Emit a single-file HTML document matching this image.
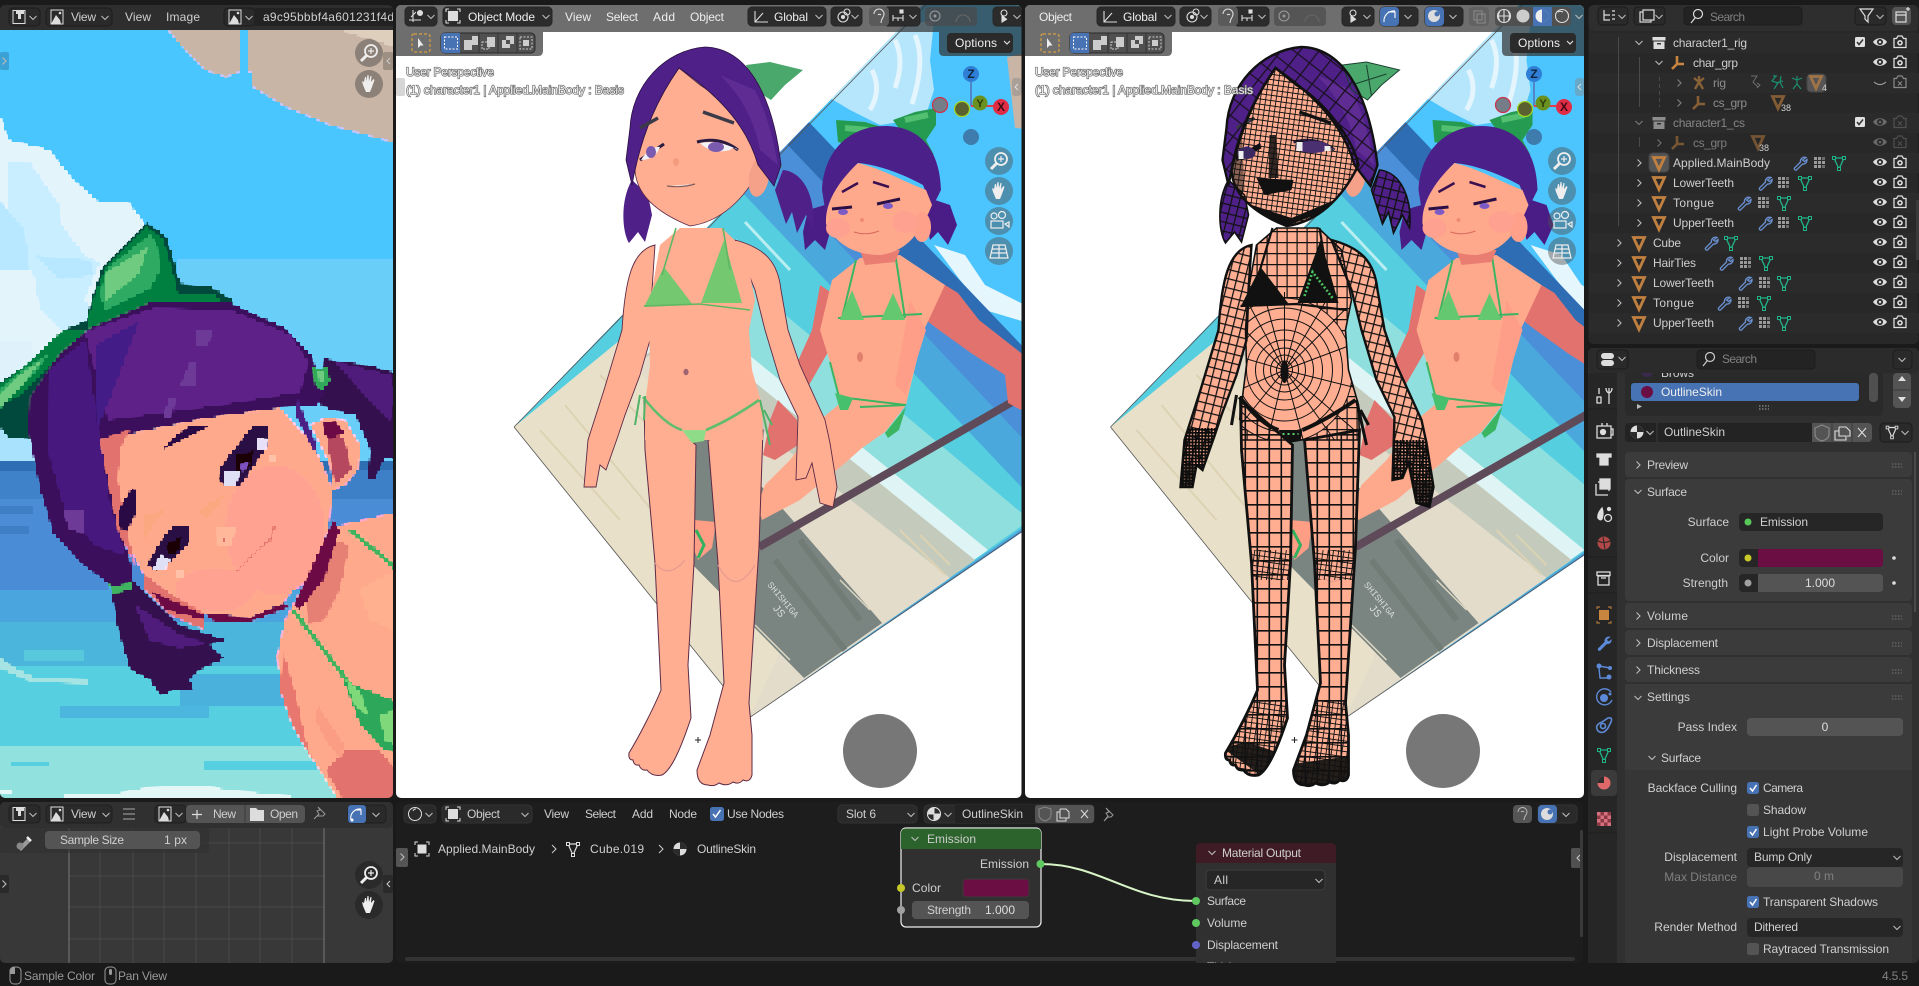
<!DOCTYPE html>
<html><head><meta charset="utf-8"><title>Blender</title>
<style>
html,body{margin:0;padding:0;background:#1a1a1a;width:1919px;height:986px;overflow:hidden}
svg{display:block}
.t{font:12px "Liberation Sans",sans-serif;fill:#cfcfcf}
.d{fill:#808080}
.w{fill:#eee}
.e{text-anchor:end}
.m{text-anchor:middle}
.o{font:12px "Liberation Sans",sans-serif;fill:#ececec;stroke:#666;stroke-width:1.3px;paint-order:stroke}
</style></head><body>
<svg width="1919" height="986" viewBox="0 0 1919 986" xmlns="http://www.w3.org/2000/svg">
<defs>
<filter id="px" filterUnits="userSpaceOnUse" x="0" y="30" width="396" height="772" color-interpolation-filters="sRGB">
<feFlood x="1" y="31" width="2" height="2" flood-color="#000"/>
<feComposite width="4" height="4"/>
<feTile result="a"/>
<feComposite in="SourceGraphic" in2="a" operator="in"/>
<feMorphology operator="dilate" radius="1"/>
</filter>
<clipPath id="c1"><rect x="0" y="5" width="393" height="793" rx="5"/></clipPath>
<clipPath id="c2"><rect x="396" y="5" width="625.5" height="793" rx="5"/></clipPath>
<clipPath id="c3"><rect x="1025" y="5" width="559" height="793" rx="5"/></clipPath>
<clipPath id="cn"><rect x="396" y="802" width="1187" height="161" rx="5"/></clipPath>
<clipPath id="cq"><polygon points="514,427 749,718 1250,377 1250,-200 1140,-220"/></clipPath>
<clipPath id="cname"><rect x="255" y="5" width="138" height="25"/></clipPath>

<!-- wire patterns -->
<pattern id="pFine" width="5.2" height="5.2" patternUnits="userSpaceOnUse" patternTransform="rotate(8)"><path d="M0 .5H5.200M.5 0V5.200" stroke="#111" stroke-width=".9" fill="none"/></pattern>
<pattern id="pDense" width="3.2" height="3.2" patternUnits="userSpaceOnUse"><path d="M0 .8H3.200M.8 0V3.200" stroke="#0c0c0c" stroke-width="1.800" fill="none"/></pattern>
<pattern id="pHair" width="15" height="15" patternUnits="userSpaceOnUse" patternTransform="rotate(38)"><path d="M0 .5H15M.5 0V15" stroke="#1a1020" stroke-width="1.600" fill="none"/></pattern>
<pattern id="pLeg" width="12" height="14" patternUnits="userSpaceOnUse"><path d="M0 .8H12M.8 0V14" stroke="#111" stroke-width="1.600" fill="none"/></pattern>
<pattern id="pArm" width="8" height="9" patternUnits="userSpaceOnUse" patternTransform="rotate(14)"><path d="M0 .6H8M.6 0V9" stroke="#111" stroke-width="1.300" fill="none"/></pattern>
<pattern id="pChest" width="10" height="11" patternUnits="userSpaceOnUse"><path d="M0 .6H10M.6 0V11" stroke="#111" stroke-width="1.200" fill="none"/></pattern>

<!-- girl shapes -->
<path id="armL" d="M655 245C632 250 625 280 622 330L604 390 588 440 584 487 596 487 600 465 606 470 618 436 625 415 640 375 650 340 652 290Z"/>
<path id="armR" d="M735 240C765 248 778 262 781 290L788 330 800 365 825 420 830 443 837 487 833 507 820 503 812 463 806 478 796 480 798 417 780 380 765 330 755 290Z"/>
<path id="torso" d="M680 228H722L745 250 755 300 749 330 752 370 762 405 763 440H645L645 405 650 365 649 330 652 290 660 245Z"/>
<path id="legL" d="M644 400 645 450 655 563 661 690C655 705 640 735 629 753Q628 760 633 760 634 766 639 765 641 771 647 770 652 777 662 775C672 770 682 745 691 718L688 665 694 563 696 445Z"/>
<path id="legR" d="M708 440 718 563 724 683 710 735 697 770Q697 785 708 785 714 787 719 783 727 787 733 782 739 785 743 780 750 783 752 775L752 735 749 703 759 547 763 430Z"/>
<path id="face" d="M679 68C660 95 642 130 635 170 636 190 650 210 690 226 720 222 745 200 762 165 755 135 725 100 700 85Z"/>
<path id="hair" d="M630 128C632 85 665 50 705 47 745 48 772 90 781 165L774 186 758 165C748 130 725 100 679 68 660 95 642 130 632 185L626 160Z"/>
<path id="pigR" d="M783 170C805 172 816 200 813 228L806 215 797 233 792 212 786 224 775 190Z"/>
<path id="pigL" d="M632 180C620 200 622 232 629 243L638 232 645 242 652 215 648 195Z"/>
<path id="bow" d="M746 65 770 62 803 70 785 85 771 100 755 90Z"/>

<!-- scene (image plane) -->
<g id="scene">
<g clip-path="url(#cq)">
<rect x="500" y="-220" width="760" height="960" fill="#4cc5ff"/>
<polygon points="880,30 934,20 930,60 934,90 925,118 880,125 850,110 825,95" fill="#b5e6fc"/>
<path d="M895 40Q905 60 895 88M915 35Q926 60 912 104M872 70Q882 90 870 110" stroke="#e4f5fd" stroke-width="5" fill="none"/>
<polygon points="1007,57 1040,50 1040,130 1015,128" fill="#c8b5a5"/>
<polygon points="934,245 965,255 985,285 1025,305 1025,322 985,310 960,280" fill="#e6f6fd"/>
<polygon points="807,120 1129,458 749,718 514,427" fill="#2e6db3"/>
<polygon points="785,142 1105,480 749,718 514,427" fill="#4a8fd8"/>
<polygon points="765,165 1075,494 749,718 514,427" fill="#4aa8dc"/>
<polygon points="740,190 1045,512 749,718 514,427" fill="#55cfe0"/>
<polygon points="720,260 1030,520 749,718 514,427" fill="#8fdfdf"/>
<path d="M745 222 790 270M735 240 770 275" stroke="#b8eeef" stroke-width="3" fill="none"/>
<polygon points="700,315 988,550 749,718 514,427" fill="#dff5f5"/>
<polygon points="690,330 975,560 749,718 514,427" fill="#c5cbbc"/>
<polygon points="660,350 950,578 749,718 514,427" fill="#e3dccb"/>
<polygon points="514,427 620,340 800,610 749,718" fill="#e8e0c8"/>
<path d="M540 430 620 520M565 405 660 520M600 375 690 470M740 560 790 610M900 530 945 575M920 535 950 565" stroke="#ddd2b4" stroke-width="2" fill="none"/>
<polygon points="804,678 882,623 775,500 700,425 688,450 688,560" fill="#7a8480"/>
<path d="M775 560 845 650M800 540 860 620" stroke="#727c76" stroke-width="6" fill="none"/>
<path d="M755 625 790 660M840 580 870 610" stroke="#ddd7c2" stroke-width="1.500" fill="none"/>
<path d="M759 547 1040 386" stroke="#5e4a58" stroke-width="8" fill="none"/>
<text x="767" y="585" transform="rotate(50 767 585)" style="font:9px 'Liberation Mono',monospace;fill:#d8dcd8">SHISHIGA</text>
<text x="772" y="608" transform="rotate(50 772 608)" style="font:11px 'Liberation Mono',monospace;fill:#d8dcd8">JS</text>
</g>
<path d="M514 427 749 718 1040 519M514 427 960-30" stroke="#555" stroke-width=".8" fill="none"/>
<!-- sitter -->
<polygon points="945,285 958,293 979,320 1030,360 1030,382 1021,410 1008,403 1005,375 971,353 939,330 926,320" fill="#e2726e"/>
<polygon points="820,285 812,330 788,383 805,392 835,340 842,300" fill="#e2726e"/>
<polygon points="778,400 797,420 798,445 775,460 763,455 770,420" fill="#e2726e"/>
<polygon points="694,520 716,522 712,548 698,560 694,550" fill="#ff9d85"/>
<path d="M696 530 704 545 698 558" stroke="#33b060" stroke-width="3" fill="none"/>
<polygon points="906,405 885,432 862,448 845,463 800,500 762,520 757,505 765,485 790,460 820,420 850,395" fill="#ffa98c"/>
<polygon points="832,280 860,258 900,255 945,285 924,330 906,405 841,405 830,362 820,330" fill="#ffa98c"/>
<polygon points="910,300 926,330 906,395 895,385" fill="#ff9e88"/>
<ellipse cx="860" cy="357" rx="3" ry="5" fill="#e2806e"/>
<polygon points="885,433 906,407 899,430 888,438" fill="#3cb563"/>
<path d="M830 362 839 397 906 405M860 407 906 405" stroke="#3cb563" stroke-width="2" fill="none"/>
<polygon points="835,393 853,398 848,410 840,410" fill="#46c06c"/>
<path d="M856 260 842 318M895 253 905 318M838 318 922 314" stroke="#3cb563" stroke-width="2" fill="none"/>
<polygon points="852,290 864,320 840,320" fill="#64c870"/>
<polygon points="893,293 905,320 881,320" fill="#64c870"/>
<polygon points="860,250 900,250 895,262 865,265" fill="#e97d72"/>
<!-- head -->
<polygon points="808,210 825,205 832,225 825,250 815,240 805,250 803,232" fill="#4a1c85"/>
<polygon points="935,200 950,205 957,225 948,245 938,232 930,240 925,215" fill="#4a1c85"/>
<polygon points="836,120 865,122 885,128 880,135 850,145 838,142" fill="#249b50"/>
<polygon points="893,120 915,112 936,108 936,125 926,140 934,155 920,150 900,130" fill="#249b50"/>
<path d="M845 128 868 130M905 120 928 115" stroke="#53bf70" stroke-width="6" fill="none"/>
<path d="M822 190C824 150 850 126 885 126 920 126 940 150 941 190L932 208 923 185C905 175 880 165 858 163 840 180 835 200 826 215Z" fill="#4c2089"/>
<path d="M858 163C835 185 825 205 826 224 835 242 852 255 880 255 905 252 920 235 932 205L926 190C900 180 885 170 858 163Z" fill="#ffa98c"/>
<ellipse cx="922" cy="227" rx="9" ry="15" fill="#ffa08a"/>
<ellipse cx="838" cy="228" rx="12" ry="10" fill="#ffa190"/>
<ellipse cx="905" cy="222" rx="13" ry="11" fill="#ffa190"/>
<path d="M842 192 858 183M873 182 889 187" stroke="#3a1050" stroke-width="2.500" fill="none"/>
<path d="M832 209 852 207M877 204 900 199" stroke="#2b1045" stroke-width="3" fill="none"/>
<ellipse cx="843" cy="212" rx="5" ry="3" fill="#7d5bc6"/>
<ellipse cx="888" cy="206" rx="5" ry="3" fill="#7d5bc6"/>
<path d="M854 232Q866 236 879 231" stroke="#d8695f" fill="none"/>
<circle cx="862" cy="220" r="2" fill="#f08a75"/>
</g>

<!-- girl -->
<g id="girl">
<use href="#pigL" fill="#4e2088"/>
<use href="#pigR" fill="#4e2088"/>
<use href="#bow" fill="#4aa86c"/>
<use href="#armL" fill="#ffae92" stroke="#5c2a45" stroke-width=".9"/>
<use href="#armR" fill="#ffae92" stroke="#5c2a45" stroke-width=".9"/>
<use href="#legL" fill="#ffae92" stroke="#5c2a45" stroke-width="1"/>
<use href="#legR" fill="#ffae92" stroke="#5c2a45" stroke-width="1"/>
<use href="#torso" fill="#ffae92"/>
<use href="#face" fill="#ffae92" stroke="#5c2a45" stroke-width=".8"/>
<ellipse cx="759" cy="177" rx="10" ry="20" fill="#f5a088" transform="rotate(10 759 177)"/>
<path d="M772 170 781 165" stroke="#5a9a5c" stroke-width="4"/>
<use href="#hair" fill="#4e2088" stroke="#2a1040" stroke-width=".8"/>
<path d="M755 90C770 120 775 150 778 165L760 150C755 125 745 100 720 75Z" fill="#5e2c92"/>
<g fill="#74c870">
<polygon points="664,267 644,307 693,305"/>
<polygon points="724,240 742,303 701,303"/>
</g>
<path d="M676 228 662 275M723 228 730 270M644 306 700 304 750 310" stroke="#5fb765" stroke-width="1.600" fill="none"/>
<path d="M643 397Q665 425 682 430M759 400Q730 420 706 430" stroke="#5fbe6e" stroke-width="2.600" fill="none"/>
<path d="M640 395 635 425M645 396 644 420M760 400 770 445M764 410 772 425" stroke="#4fb266" stroke-width="2" fill="none"/>
<polygon points="682,430 706,430 704,441 692,443" fill="#8fdc88"/>
<ellipse cx="686" cy="372" rx="2.600" ry="3.200" fill="#a06470"/>
<path d="M655 563Q668 580 685 560M718 565Q735 598 755 565" stroke="#e59a90" stroke-width="1.200" fill="none"/>
<path d="M703 112 734 123" stroke="#3a3a48" stroke-width="3.500" fill="none"/>
<path d="M640 128 658 118" stroke="#3a3a48" stroke-width="3.500" fill="none"/>
<path d="M697 142Q720 136 738 150" stroke="#2a1c40" stroke-width="3" fill="none"/>
<path d="M700 143Q712 155 730 150 735 146 738 150 720 140 700 143Z" fill="#f2f2f8"/>
<ellipse cx="716" cy="147" rx="8" ry="5" fill="#7a5bb0"/>
<path d="M640 160 664 144" stroke="#2a1c40" stroke-width="3" fill="none"/>
<path d="M641 160Q655 160 660 147 650 146 641 160Z" fill="#f2f2f8"/>
<ellipse cx="651" cy="152" rx="5" ry="6" fill="#7a5bb0"/>
<path d="M667 186Q682 188 695 184" stroke="#7f5d5d" stroke-width="1.200" fill="#f5ece8"/>
<ellipse cx="676" cy="162" rx="3" ry="4" fill="#f59c7f"/>
</g>

<!-- wire overlay -->
<clipPath id="cTorso"><use href="#torso"/></clipPath>
<clipPath id="cArms"><use href="#armL"/><use href="#armR"/></clipPath>
<clipPath id="cLegs"><use href="#legL"/><use href="#legR"/></clipPath>
<clipPath id="cFace"><use href="#face"/></clipPath>
<g id="wire">
<use href="#bow" fill="none" stroke="#1a4030" stroke-width="1"/>
<path d="M755 85 790 74M770 65 775 96" stroke="#1a4030"/>
<use href="#pigL" fill="url(#pArm)" stroke="#111" stroke-width="1.600"/>
<use href="#pigR" fill="url(#pArm)" stroke="#111" stroke-width="1.600"/>
<use href="#torso" fill="url(#pChest)"/>
<g clip-path="url(#cTorso)" fill="none" stroke="#111" stroke-width="1">
<ellipse cx="688" cy="370" rx="68" ry="72" fill="#ffae92" stroke="none"/>
<ellipse cx="688" cy="370" rx="8" ry="9"/><ellipse cx="688" cy="370" rx="14" ry="15"/><ellipse cx="688" cy="370" rx="21" ry="22"/><ellipse cx="688" cy="370" rx="29" ry="30"/><ellipse cx="688" cy="370" rx="38" ry="40"/><ellipse cx="688" cy="370" rx="48" ry="51"/><ellipse cx="688" cy="370" rx="58" ry="62"/><ellipse cx="688" cy="370" rx="68" ry="72"/>
<path d="M688 370 628 310M688 370 650 300M688 370 668 296M688 370 688 292M688 370 708 296M688 370 730 300M688 370 748 310M688 370 768 340M688 370 768 390M688 370 758 430M688 370 738 440M688 370 708 445M688 370 670 445M688 370 640 430M688 370 620 400M688 370 620 350"/>
<ellipse cx="688" cy="372" rx="4" ry="11" fill="#111" stroke="none"/>
</g>
<use href="#torso" fill="none" stroke="#111" stroke-width="1.600"/>
<use href="#armL" fill="url(#pArm)" stroke="#111" stroke-width="2.400"/>
<use href="#armR" fill="url(#pArm)" stroke="#111" stroke-width="2.400"/>
<g clip-path="url(#cArms)"><rect x="580" y="428" width="45" height="65" fill="url(#pDense)"/><rect x="790" y="440" width="50" height="72" fill="url(#pDense)"/>
<rect x="580" y="465" width="30" height="28" fill="#111" opacity=".6"/><rect x="795" y="480" width="45" height="32" fill="#111" opacity=".6"/></g>
<use href="#legL" fill="url(#pLeg)" stroke="#111" stroke-width="2.800"/>
<use href="#legR" fill="url(#pLeg)" stroke="#111" stroke-width="2.800"/>
<g clip-path="url(#cLegs)"><rect x="625" y="700" width="130" height="90" fill="url(#pFine)"/><rect x="650" y="550" width="110" height="30" fill="url(#pFine)"/>
<polygon points="626,748 668,778 680,752 650,742" fill="#111" opacity=".92"/><polygon points="695,764 754,756 754,788 695,788" fill="#111" opacity=".92"/></g>
<use href="#face" fill="url(#pFine)"/>
<g clip-path="url(#cFace)">
<path d="M630 130 645 125 648 190 640 205Z" fill="#111" opacity=".5"/>
<path d="M660 178 697 180 695 190 668 195Z" fill="#111"/>
<path d="M673 135 680 135 682 178 672 178Z" fill="#111" opacity=".85"/>
<path d="M640 200 690 226 745 205 750 195 695 218Z" fill="#111"/>
<path d="M640 158 664 146" stroke="#111" stroke-width="5"/>
<path d="M703 112 734 123" stroke="#111" stroke-width="3"/>
<ellipse cx="716" cy="147" rx="17" ry="6" fill="#4a3070"/>
<rect x="700" y="142" width="6" height="9" fill="#eee"/><rect x="728" y="146" width="6" height="5" fill="#eee"/>
<ellipse cx="650" cy="153" rx="9" ry="6" fill="#3a2860"/><rect x="642" y="151" width="5" height="8" fill="#eee"/>
</g>
<use href="#face" fill="none" stroke="#111" stroke-width="2.500"/>
<use href="#hair" fill="url(#pHair)" stroke="#111" stroke-width="2.400"/>
<polygon points="664,267 644,307 693,305" fill="#111"/>
<polygon points="724,240 742,303 701,303" fill="#111"/>
<path d="M708 296 716 272 730 290 736 298" stroke="#4ac060" stroke-width="2.600" stroke-dasharray="2 2" fill="none"/>
<path d="M676 228 662 275M723 228 730 270M644 306 700 304 750 310" stroke="#111" stroke-width="2.200" fill="none"/>
<path d="M643 397Q665 425 682 430M759 400Q730 420 706 430" stroke="#111" stroke-width="4" fill="none"/>
<path d="M640 395 635 425M645 396 644 420M760 400 770 445M764 410 772 425" stroke="#111" stroke-width="3" fill="none"/>
<polygon points="682,430 706,430 704,441 692,443" fill="#111"/>
<path d="M686 434H702" stroke="#5ad070" stroke-width="2" stroke-dasharray="2 3"/>
</g>

<!-- viewport UI shared -->
<g id="vpR">
<path d="M939 32H1021.5V56H944Q939 56 939 51Z" fill="#303030" opacity=".7"/>
<rect x="947" y="33" width="66" height="20" rx="4" fill="#2b2b2b"/>
<text class="t w" x="955" y="47" textLength="42">Options</text>
<path d="M1004 41l3 3 3-3" fill="none" stroke="#ddd" stroke-width="1.200"/>
<path d="M971 82V106" stroke="#5386c8" stroke-width="2"/>
<path d="M971 106H994" stroke="#e03c4e" stroke-width="2"/>
<circle cx="971" cy="74" r="8" fill="#2f7fd6"/><text x="971" y="78" class="t m" style="fill:#10243c;font-weight:bold">Z</text>
<circle cx="971" cy="137" r="8" fill="#3b6f9e" opacity=".85"/>
<circle cx="980" cy="103" r="7.500" fill="#6a9020"/><text x="980" y="107" class="t m" style="fill:#2c3c0c;font-weight:bold;font-size:11px">Y</text>
<circle cx="940" cy="105" r="7.500" fill="#757d88" stroke="#d03048" stroke-width="1.200"/>
<circle cx="962" cy="109" r="7.500" fill="#5a6030" stroke="#a4d820" stroke-width="1.200"/>
<circle cx="1001" cy="107" r="8" fill="#e02c44"/><text x="1001" y="111" class="t m" style="fill:#3c0c14;font-weight:bold">X</text>
<g fill="#505050" opacity=".45"><circle cx="999" cy="161" r="14"/><circle cx="999" cy="191" r="14"/><circle cx="999" cy="221" r="14"/><circle cx="999" cy="251" r="14"/></g>
<use href="#iZoom" x="999" y="161"/><use href="#iHand" x="999" y="191"/>
<g fill="none" stroke="#eee" stroke-width="1.200">
<circle cx="994" cy="216" r="3"/><circle cx="1002" cy="215" r="3.500"/><rect x="991" y="221" width="12" height="7"/><path d="M1005 224l4-2v5z"/>
<path d="M993 245H1005L1008 258H990ZM999 245V258M992 249H1006M991 253H1007"/>
</g>
<rect x="1012" y="78" width="9.500" height="18" rx="3" fill="#888" opacity=".45"/>
<path d="M1018 84l-3 3 3 3" fill="none" stroke="#ddd"/>
</g>

<g id="vpL">
<path d="M396 32H543V51Q543 56 538 56H396Z" fill="#303030" opacity=".7"/>
<rect x="412" y="34" width="18" height="18" rx="2" fill="none" stroke="#d8a040" stroke-width="1.200" stroke-dasharray="3 2"/>
<path d="M418 38v10l2.500-2.500 3 0z" fill="#eee"/>
<rect x="441" y="33" width="94" height="20" rx="4" fill="#505050" stroke="#2a2a2a"/>
<path d="M445 33H460V53H445Q441 53 441 49V37Q441 33 445 33Z" fill="#4772b3"/>
<rect x="444.500" y="37" width="13" height="12" fill="none" stroke="#fff" stroke-dasharray="2 1.500"/>
<path d="M479 33V53M498 33V53M517 33V53" stroke="#333"/>
<path d="M464 40h8v-4h6v9h-6v5h-8z" fill="#ccc"/>
<path d="M487 37h8v10h-8v-4" fill="#ccc"/><rect x="482" y="42" width="7" height="7" fill="none" stroke="#ccc" stroke-dasharray="2 1"/>
<path d="M506 40h-4v8h8v-4h4v-8h-8z" fill="#ccc"/><rect x="506" y="40" width="4" height="4" fill="#505050"/>
<rect x="520" y="37" width="12" height="12" fill="none" stroke="#ccc" stroke-dasharray="2 1.500"/><rect x="523" y="40" width="6" height="6" fill="#ccc"/>
<text class="o" x="406" y="76" textLength="88">User Perspective</text>
<text class="o" x="406" y="94" textLength="218">(1) character1 | Applied.MainBody : Basis</text>
</g>

<!-- icons -->
<g id="iZoom" fill="none" stroke="#eee" stroke-width="1.800"><circle cx="2" cy="-2" r="6"/><path d="M-2.500 2.500-8 8" stroke-width="3"/><path d="M2-5V1M-1-2H5" stroke-width="1.200"/></g>
<g id="iHand"><path d="M-6 1-7-3-5-2-4-7-3-7-2.500-3-1.500-9-.5-9 0-3 1.500-8 2.500-8 2-2 4.500-5 5.500-4 3 3 1 8H-3Z" fill="#eee"/></g>
<g id="eye"><path d="M-7 0C-4-5 4-5 7 0 4 5-4 5-7 0Z" fill="#ddd"/><circle r="3" fill="#282828"/><circle r="1.300" fill="#ddd"/></g>
<g id="eyeD" opacity=".35"><use href="#eye"/></g>
<g id="cam"><path d="M-6-3.500H-3.500L-2-6H2L3.500-3.500H6V5.500H-6Z" fill="none" stroke="#ddd" stroke-width="1.300"/><circle cy=".8" r="2.800" fill="#ddd"/><circle cy=".8" r="1.200" fill="#282828"/></g>
<g id="camX" opacity=".75"><path d="M-6-3.500H-3.500L-2-6H2L3.500-3.500H6V5.500H-6Z" fill="none" stroke="#aaa" stroke-width="1.200"/><path d="M-2-.5 2 3.500M2-.5-2 3.500" stroke="#aaa"/></g>
<g id="mesh"><path d="M-5.500-5.500H5.500L0 6.500Z" fill="none" stroke="#c08040" stroke-width="2.800"/></g>
<g id="tri"><path d="M-5-5H5L0 6Z" fill="none" stroke="#1eb487" stroke-width="1.300"/><g fill="#282828" stroke="#1eb487"><rect x="-6.500" y="-6.500" width="3" height="3"/><rect x="3.500" y="-6.500" width="3" height="3"/><rect x="-1.500" y="4.500" width="3" height="3"/></g></g>
<g id="wr"><path d="M6-5.500A4 4 0 0 0 .5-1L-5.500 5A1.500 1.500 0 0 0-3.500 7L2.500 1A4 4 0 0 0 7-3.500L4.500-1.500 2.500-3Z" fill="none" stroke="#6a90d0" stroke-width="1.300"/></g>
<g id="dots" fill="#9a9a9a"><rect x="-6" y="-6" width="3" height="3"/><rect x="-2" y="-6" width="3" height="3"/><rect x="2" y="-6" width="3" height="3" opacity=".6"/><rect x="-6" y="-2" width="3" height="3"/><rect x="-2" y="-2" width="3" height="3"/><rect x="2" y="-2" width="3" height="3"/><rect x="-6" y="2" width="3" height="3"/><rect x="-2" y="2" width="3" height="3"/><rect x="2" y="2" width="3" height="3" opacity=".6"/></g>
<g id="empty"><path d="M-1-7V1M-1 1-6 6M-1 1H6" fill="none" stroke="#c8853f" stroke-width="2.600"/></g>
<g id="coll"><rect x="-6.500" y="-6" width="13" height="3.500" fill="#ddd"/><rect x="-5.500" y="-1.500" width="11" height="7.500" fill="#ddd"/><rect x="-2" y="0" width="4" height="1.500" fill="#333"/></g>
<g id="chk"><rect x="-5" y="-5" width="10" height="10" rx="1.500" fill="#e0e0e0"/><path d="M-3 0-1 2.500 3-2.500" fill="none" stroke="#333" stroke-width="1.500"/></g>
<g id="cd"><path d="M-3.500-2 0 1.500 3.500-2" fill="none" stroke="#bbb" stroke-width="1.100"/></g>
<g id="cr"><path d="M-1.500-3.500 2 0-1.500 3.500" fill="none" stroke="#bbb" stroke-width="1.100"/></g>
<g id="editorImg"><rect x="-6" y="-6.500" width="12" height="13" fill="none" stroke="#ddd"/><path d="M-3-6H5V-3H2V2H-1V-3H-3Z" fill="#ddd"/></g>
<g id="imgI"><rect x="-6" y="-7" width="12" height="14" fill="none" stroke="#ddd"/><path d="M-6 7-1-2 3 3 4 7Z" fill="#ddd"/><circle cx="3" cy="-4" r="1.300" fill="#ddd"/></g>
<g id="matI"><circle r="6.500" fill="#ddd"/><path d="M0-6.500A6.500 6.500 0 0 1 6.500 0H0ZM0 0H-6.500A6.500 6.500 0 0 0 0 6.500Z" fill="#2b2b2b"/></g>
<g id="objI"><path d="M-7-4V-7H-4M4-7H7V-4M7 4V7H4M-4 7H-7V4" fill="none" stroke="#ddd"/><rect x="-4.500" y="-4.500" width="9" height="9" fill="#ddd"/></g>
</defs>

<rect width="1919" height="986" fill="#1a1a1a"/>

<!-- ============ IMAGE EDITOR TOP ============ -->
<g clip-path="url(#c1)">
<g filter="url(#px)">
<rect x="0" y="30" width="396" height="772" fill="#4ac6ff"/>
<rect x="178" y="260" width="218" height="200" fill="#69cef8"/>
<!-- beige -->
<polygon points="168,30 185,50 205,70 226,77 239,72 239,30" fill="#c8b5a5"/>
<polygon points="247,30 247,72 251,72 253,87 286,107 330,125 392,142 396,142 396,30" fill="#c8b5a5"/>
<polygon points="341,30 396,47 396,30" fill="#decfbd"/>
<!-- clouds -->
<polygon points="0,115 8,140 49,150 73,180 100,203 129,203 143,222 160,300 170,345 90,400 30,430 0,460" fill="#e4f4fb"/>
<polygon points="8,162 30,162 60,205 62,225 85,255 100,262 85,300 110,330 60,330 30,270 8,220" fill="#c8eeff"/>
<polygon points="0,200 25,230 30,270 0,270" fill="#b8e8ff"/>
<polygon points="35,255 90,260 95,275 60,280" fill="#b8e8ff"/>
<polygon points="35,285 60,280 85,300 85,325 60,330 40,310" fill="#c8eeff"/>
<polygon points="0,340 30,340 55,410 10,440 0,450" fill="#dff2fb"/>
<polygon points="0,395 40,420 40,460 0,460" fill="#a8e2fc"/>
<!-- sea -->
<rect y="460" width="396" height="12" fill="#2e6fb4"/>
<rect y="472" width="396" height="28" fill="#3f82ca"/>
<rect y="500" width="396" height="90" fill="#4a8dd6"/>
<rect x="0" y="505" width="34" height="10" fill="#3f7fc6"/><rect y="525" width="30" height="8" fill="#3f7fc6"/>
<rect x="330" y="470" width="66" height="30" fill="#3d80c8"/>
<rect y="590" width="396" height="32" fill="#4aa5de"/>
<rect x="120" y="610" width="130" height="25" fill="#4a8dd6" opacity=".7"/>
<rect y="622" width="396" height="46" fill="#4cb5dc"/>
<rect x="24" y="650" width="60" height="10" fill="#58c9dc"/>
<rect y="665" width="396" height="84" fill="#56cfe0"/>
<rect x="180" y="675" width="110" height="30" fill="#4ab1dc"/>
<rect x="60" y="705" width="150" height="12" fill="#4cb6de"/>
<rect y="747" width="396" height="55" fill="#91e1df"/>
<rect x="205" y="760" width="190" height="10" fill="#56cfe0"/>
<rect x="10" y="762" width="40" height="4" fill="#56cfe0"/>
<polygon points="0,658 13,667 33,677 87,680 87,684 33,682 13,674 0,668" fill="#a5e4e2"/>
<polygon points="0,790 13,790 13,795 0,795" fill="#e4f7f7"/>
<polygon points="65,795 120,793 145,788 200,785 228,790 290,796 290,802 65,802" fill="#e4f7f7"/>
<!-- body -->
<polygon points="333,527 393,513 396,513 396,802 340,802 310,755 283,697 277,657 285,620" fill="#ffa98c"/>
<polygon points="305,600 335,540 350,545 340,590 325,620 308,625" fill="#e67f74"/>
<polygon points="340,795 325,770 345,750 380,750 396,770 396,802 345,802" fill="#e2726e"/>
<polygon points="283,650 295,690 305,735 312,760 292,725 280,690" fill="#e8776f"/>
<polygon points="318,705 345,745 340,760 325,740 315,720" fill="#fb9d84"/>
<polygon points="360,590 396,570 396,630 370,620" fill="#ffb08f"/>
<!-- bikini -->
<path d="M350 530 396 568M293 610 349 683" stroke="#3fb35f" stroke-width="5" fill="none"/>
<polygon points="343,680 393,700 396,702 396,753 383,750 360,725" fill="#2da85a"/>
<polygon points="346,680 360,692 368,716 355,705" fill="#7fd97a"/>
<polygon points="380,715 396,710 396,745 385,740" fill="#7fd97a"/>
<!-- bow -->
<polygon points="147,222 167,237 176,267 180,283 212,287 233,300 240,330 60,400 30,440 7,437 0,427 0,383 17,370 60,350 63,330 86,320 94,290 102,267" fill="#00493c"/>
<polygon points="147,227 163,240 172,270 178,295 215,295 228,310 90,335 88,320 96,292 106,268" fill="#008040"/>
<polygon points="150,235 157,245 160,270 150,288 105,310 100,293 108,268" fill="#2eaa63"/>
<polygon points="147,248 139,273 106,300 106,273" fill="#6fcb80"/>
<polygon points="63,330 88,330 60,355 20,395 0,405 0,385 17,372" fill="#008040"/>
<polygon points="48,355 35,372 8,395 0,410 0,390 20,372" fill="#2eaa63"/>
<polygon points="40,362 22,385 0,408 0,395 20,375" fill="#6fcb80"/>
<!-- lower pigtail -->
<polygon points="110,585 133,580 180,625 227,640 210,645 225,658 200,670 190,680 194,690 175,690 160,696 150,680 130,670 118,630" fill="#34104f"/>
<polygon points="135,605 180,635 205,643 180,648 150,640" fill="#4f1c7b"/>
<polygon points="107,582 133,578 133,588 113,594" fill="#3fb35f"/>
<!-- upper pigtail -->
<polygon points="323,358 345,362 370,365 393,372 396,372 396,460 385,458 375,480 368,480 370,450 355,415 330,410 313,400 320,385" fill="#34104f"/>
<polygon points="335,362 390,375 396,395 390,420 365,395" fill="#4f1c7b"/>
<!-- hair -->
<polygon points="90,328 151,302 229,302 286,328 313,357 317,373 325,392 318,405 280,408 207,418 100,440 117,520 133,570 133,582 113,587 80,563 53,533 40,490 28,430 30,397 60,353" fill="#3b0f5c"/>
<polygon points="85,332 155,308 230,310 290,335 308,362 300,392 220,405 108,420 90,350" fill="#5e2187"/>
<polygon points="50,370 85,340 100,440 110,505 125,555 95,545 65,510 48,450" fill="#47197f"/>
<polygon points="95,345 140,320 110,400 98,425" fill="#431c88"/>
<g fill="#6e3a98"><polygon points="197,330 213,330 207,347 197,347"/><polygon points="190,363 197,363 197,385 180,387"/><polygon points="170,397 177,397 170,417 163,417"/><polygon points="63,510 83,510 85,533 70,530"/></g>
<polygon points="313,368 327,368 330,380 322,390 315,385" fill="#2fa95a"/>
<polygon points="318,372 325,372 325,380 319,382" fill="#6fcb80"/>
<!-- face -->
<polygon points="100,440 207,418 280,408 300,430 313,443 333,490 328,530 310,570 283,603 250,617 203,613 170,593 143,573 120,530" fill="#ffa98c"/>
<polygon points="100,440 130,430 120,450 118,480 125,520 135,565 118,530" fill="#e2726e"/>
<ellipse cx="275" cy="530" rx="50" ry="65" fill="#ffa291"/>
<ellipse cx="215" cy="590" rx="40" ry="22" fill="#ffa291"/>
<polygon points="203,613 250,617 283,603 293,606 250,622 215,622" fill="#6b0a45"/>
<polygon points="310,570 333,520 340,530 325,578 300,610 293,606" fill="#6b0a45"/>
<polygon points="143,573 170,593 203,612 205,630 170,615 145,590" fill="#e2726e"/>
<polygon points="150,590 205,615 205,620 165,610" fill="#6b0a45"/>
<polygon points="298,400 315,440 318,455 310,445 295,415" fill="#4c1f85"/>
<!-- ear -->
<polygon points="310,425 325,418 345,420 360,445 358,470 345,485 333,490 330,465 318,440" fill="#ffa98c"/>
<polygon points="325,425 345,440 352,470 335,485 330,460" fill="#b5485f"/>
<polygon points="322,423 335,420 345,432 330,440 324,435" fill="#6b0a45"/>
<!-- eyes -->
<polygon points="253,425 267,425 267,447 240,487 225,487 218,480 220,467 233,450" fill="#2a0f45"/>
<polygon points="258,438 267,440 266,450 258,450" fill="#e8e0f8"/>
<polygon points="237,455 255,450 250,468 235,475" fill="#1a0005"/>
<polygon points="225,472 240,472 235,487 225,487" fill="#dfe0f5"/>
<polygon points="240,465 250,462 243,472" fill="#7d50c0"/>
<polygon points="190,525 190,543 170,563 157,572 146,565 163,537 173,527" fill="#2a0f45"/>
<polygon points="160,555 170,560 165,570 153,570 158,560" fill="#dfe0f5"/>
<polygon points="165,545 183,535 178,552 168,555" fill="#1a0005"/>
<polygon points="163,450 213,425 187,427 170,440" fill="#2a0a45"/>
<polygon points="132,487 137,490 137,512 127,532 118,527 118,510" fill="#2a0a45"/>
<polyline points="275,525 270,540 250,557 237,572" fill="none" stroke="#e0706c" stroke-width="2"/>
<polygon points="217,528 236,528 230,546 218,546" fill="#ffb89a"/>
<rect x="222" y="538" width="4" height="4" fill="#e0706c"/>
<rect x="270" y="456" width="7" height="7" fill="#ffc2a8"/><rect x="176" y="570" width="8" height="7" fill="#ffc2a8"/>
<polygon points="198,510 230,490 215,510 205,520" fill="#fba880"/>
<polygon points="145,515 165,510 150,530 145,540" fill="#fba880"/>
</g>
<!-- header -->
<rect x="0" y="5" width="393" height="25" fill="#2e2e2e"/>
<g fill="#2a2a2a" stroke="#1c1c1c">
<rect x="9" y="8" width="31" height="18" rx="4"/><rect x="46" y="8" width="66" height="18" rx="4"/><rect x="224" y="8" width="31" height="18" rx="4"/>
</g>
<rect x="255" y="8" width="140" height="18" fill="#222"/>
<use href="#editorImg" x="19" y="17"/><use href="#cd" x="33" y="18"/>
<use href="#imgI" x="57" y="17"/><use href="#cd" x="105" y="18"/>
<use href="#imgI" x="235" y="17"/><use href="#cd" x="249" y="18"/>
<text class="t" x="71" y="21" textLength="25">View</text>
<text class="t" x="125" y="21" textLength="26">View</text>
<text class="t" x="166" y="21" textLength="34">Image</text>
<g clip-path="url(#cname)"><text class="t" x="263" y="21" textLength="131">a9c95bbbf4a601231f4d</text></g>
<rect x="0" y="52" width="9" height="18" rx="2" fill="#3388b8" opacity=".6"/><use href="#cr" x="4" y="61"/>
<rect x="383" y="52" width="10" height="18" rx="2" fill="#8a7f74" opacity=".7"/>
<path d="M390 58l-3 3 3 3" fill="none" stroke="#ccc"/>
<circle cx="369" cy="53" r="14" fill="#8c8178"/><circle cx="369" cy="84" r="14" fill="#8c8178"/>
<use href="#iZoom" x="369" y="53"/><use href="#iHand" x="369" y="84"/>
</g>

<!-- ============ VIEWPORT 1 ============ -->
<g clip-path="url(#c2)">
<rect x="396" y="5" width="626" height="793" fill="#fff"/>
<use href="#scene"/>
<use href="#girl"/>
<circle cx="880" cy="751" r="37" fill="#777"/>
<path d="M698 737v6M695 740h6" stroke="#222" stroke-width="1"/>
<rect x="396" y="5" width="626" height="27" fill="#303030" opacity=".7"/>
<g fill="#2c2c2c" stroke="#262626">
<rect x="405" y="7" width="32" height="19" rx="4"/><rect x="443" y="7" width="109" height="19" rx="4"/>
<rect x="748" y="7" width="78" height="19" rx="4"/><rect x="831" y="7" width="31" height="19" rx="4"/><rect x="884" y="7" width="36" height="19" rx="4"/><rect x="993" y="7" width="32" height="19" rx="4"/>
</g>
<rect x="869" y="7" width="20" height="19" rx="4" fill="#5a5a5a"/>
<rect x="925" y="7" width="52" height="19" rx="4" fill="#4a4a4a" opacity=".7"/>
<g fill="none" stroke="#ddd" stroke-width="1.100">
<path d="M413 10v12M409 20h12M416 12l-5 5" /><circle cx="420" cy="13" r="2.500" fill="#ddd"/>
<use href="#cd" x="431" y="17"/>
<use href="#objI" x="453" y="16"/><use href="#cd" x="546" y="17"/>
<path d="M755 11V22H768M755 22 763 13"/><use href="#cd" x="819" y="17"/>
<circle cx="843" cy="17" r="5"/><circle cx="843" cy="17" r="1.500" fill="#ddd"/><circle cx="847" cy="12" r="3"/><use href="#cd" x="855" y="17"/>
<path d="M874 14a5 5 0 0 1 10 0c0 4-3 4-3 9M878 15a2 2 0 0 1 3 0"/>
<path d="M893 15v6M898 18v3M903 15v6M893 18h10"/><rect x="900" y="10" width="3" height="3" fill="#ddd"/><use href="#cd" x="913" y="17"/>
<circle cx="935" cy="16" r="5" stroke="#999"/><circle cx="935" cy="16" r="1.500" fill="#999" stroke="none"/><path d="M956 22a7 7 0 0 1 14 0" stroke="#666"/>
<circle cx="1004" cy="13" r="3"/><path d="M1002 15v7l5-3" fill="#ddd"/><use href="#cd" x="1017" y="17"/>
</g>
<text class="t w" x="468" y="21" textLength="67">Object Mode</text>
<text class="t w" x="565" y="21" textLength="26">View</text>
<text class="t w" x="606" y="21" textLength="32">Select</text>
<text class="t w" x="653" y="21" textLength="22">Add</text>
<text class="t w" x="690" y="21" textLength="34">Object</text>
<text class="t w" x="774" y="21" textLength="34">Global</text>
<use href="#vpL"/>
<use href="#vpR"/>
<rect x="396" y="78" width="9" height="18" rx="2" fill="#999" opacity=".4"/>
</g>

<!-- ============ VIEWPORT 2 ============ -->
<g clip-path="url(#c3)">
<rect x="1025" y="5" width="559" height="793" fill="#fff"/>
<g transform="translate(596.5 0)">
<use href="#scene"/>
<use href="#girl"/>
<use href="#wire"/>
</g>
<path d="M1294.500 737v6M1291.500 740h6" stroke="#222"/>
<circle cx="1443" cy="751" r="37" fill="#777"/>
<rect x="1025" y="5" width="559" height="27" fill="#303030" opacity=".7"/>
<g fill="#2c2c2c" stroke="#262626">
<rect x="1097" y="7" width="78" height="19" rx="4"/><rect x="1180" y="7" width="31" height="19" rx="4"/><rect x="1234" y="7" width="35" height="19" rx="4"/>
<rect x="1342" y="7" width="32" height="19" rx="4"/><rect x="1380" y="7" width="38" height="19" rx="4"/><rect x="1425" y="7" width="38" height="19" rx="4"/>
</g>
<rect x="1218" y="7" width="20" height="19" rx="4" fill="#5a5a5a"/>
<rect x="1274" y="7" width="52" height="19" rx="4" fill="#4a4a4a" opacity=".7"/>
<rect x="1380" y="7" width="19" height="19" rx="4" fill="#4772b3"/>
<rect x="1425" y="7" width="19" height="19" rx="4" fill="#4772b3"/>
<rect x="1469" y="7" width="20" height="19" rx="4" fill="#5a5a5a" opacity=".6"/>
<rect x="1495" y="7" width="76" height="19" rx="4" fill="#505050"/>
<rect x="1533" y="7" width="19" height="19" fill="#4772b3"/>
<g fill="none" stroke="#ddd" stroke-width="1.100">
<path d="M1104 11V22H1117M1104 22 1112 13"/><use href="#cd" x="1168" y="17"/>
<circle cx="1192" cy="17" r="5"/><circle cx="1192" cy="17" r="1.500" fill="#ddd"/><circle cx="1196" cy="12" r="3"/><use href="#cd" x="1204" y="17"/>
<path d="M1223 14a5 5 0 0 1 10 0c0 4-3 4-3 9M1227 15a2 2 0 0 1 3 0"/>
<path d="M1242 15v6M1247 18v3M1252 15v6M1242 18h10"/><rect x="1249" y="10" width="3" height="3" fill="#ddd"/><use href="#cd" x="1262" y="17"/>
<circle cx="1284" cy="16" r="5" stroke="#999"/><circle cx="1284" cy="16" r="1.500" fill="#999" stroke="none"/><path d="M1305 22a7 7 0 0 1 14 0" stroke="#666"/>
<circle cx="1353" cy="13" r="3"/><path d="M1351 15v7l5-3" fill="#ddd"/><use href="#cd" x="1367" y="17"/>
<path d="M1384 22a10 10 0 0 1 11-11M1388 12h7v6" stroke="#fff"/><use href="#cd" x="1408" y="17"/>
<circle cx="1434" cy="16" r="6" fill="#ddd" stroke="none"/><circle cx="1437" cy="14" r="2.500" fill="#4772b3" stroke="none"/><use href="#cd" x="1453" y="17"/>
<rect x="1474" y="11" width="8" height="9" stroke="#888"/><rect x="1477" y="14" width="8" height="9" stroke="#888"/>
<circle cx="1504" cy="16" r="6.500"/><path d="M1497.500 16h13M1504 9.500v13M1500 11c-2 3-2 7 0 10M1508 11c2 3 2 7 0 10"/>
<circle cx="1523" cy="16" r="6.500" fill="#ccc" stroke="none"/>
<circle cx="1542" cy="16" r="6.500" fill="#eee" stroke="none"/><path d="M1542 9.500a6.500 6.500 0 0 1 0 13z" fill="#4772b3" stroke="none"/>
<circle cx="1562" cy="16" r="6.500"/><path d="M1558 12a5 5 0 0 1 5 0" />
<use href="#cd" x="1579" y="17"/>
</g>
<text class="t w" x="1039" y="21" textLength="33">Object</text>
<text class="t w" x="1123" y="21" textLength="34">Global</text>
<g transform="translate(629 0)"><use href="#vpL"/></g>
<g transform="translate(563 0)"><use href="#vpR"/></g>
</g>

<!-- ============ OUTLINER ============ -->
<rect x="1588.500" y="5" width="330" height="339" rx="5" fill="#282828"/>
<g fill="#2b2b2b">
<rect x="1589" y="33" width="330" height="20"/><rect x="1589" y="73" width="330" height="20"/><rect x="1589" y="113" width="330" height="20"/><rect x="1589" y="153" width="330" height="20"/><rect x="1589" y="193" width="330" height="20"/><rect x="1589" y="233" width="330" height="20"/><rect x="1589" y="273" width="330" height="20"/><rect x="1589" y="313" width="330" height="20"/>
</g>
<rect x="1588.500" y="5" width="330" height="26" rx="5" fill="#2e2e2e"/>
<g fill="#2a2a2a" stroke="#1c1c1c">
<rect x="1598" y="7" width="30" height="18" rx="4"/><rect x="1634" y="7" width="31" height="18" rx="4"/><rect x="1684" y="7" width="118" height="18" rx="4" fill="#232323"/><rect x="1855" y="7" width="31" height="18" rx="4"/>
</g>
<rect x="1892" y="7" width="19" height="18" rx="4" fill="#545454"/>
<g fill="none" stroke="#ddd" stroke-width="1.200">
<path d="M1604 10v10h6M1604 15h6M1612 11h3M1612 15h3M1612 19h3"/><use href="#cd" x="1622" y="17"/>
<rect x="1640" y="12" width="11" height="10"/><rect x="1643" y="10" width="11" height="10" fill="#2a2a2a"/><use href="#cd" x="1659" y="17"/>
<circle cx="1698" cy="14" r="4.500"/><path d="M1695 18l-4 5"/>
<path d="M1860 9h13l-5 7v6l-3-3v-3z"/><use href="#cd" x="1880" y="17"/>
<rect x="1896" y="12" width="10" height="10"/><path d="M1896 15h10M1906 9h4M1908 7v4"/>
</g>
<text class="t d" x="1710" y="21" textLength="35">Search</text>
<!-- guides -->
<path d="M1618.500 37V226M1639.500 57V107M1639.500 137V147" stroke="#4a4a4a" fill="none"/>
<path d="M1659.500 77V107" stroke="#4a4a4a" stroke-dasharray="4 3" fill="none"/>
<!-- rows -->
<use href="#cd" x="1639" y="43"/><use href="#coll" x="1659" y="43"/><text class="t" x="1673" y="47" textLength="74">character1_rig</text><use href="#chk" x="1860" y="42"/>
<use href="#cd" x="1659" y="63"/><use href="#empty" x="1678" y="63"/><text class="t" x="1693" y="67" textLength="45">char_grp</text>
<g opacity=".6"><use href="#cr" x="1679" y="83"/>
<path d="M1699 76v6M1694 78l5 4 5-4M1699 82l-4 7M1699 82l4 7" fill="none" stroke="#c8853f" stroke-width="2.400"/>
<text class="t" x="1713" y="87" textLength="13">rig</text>
<path d="M1751 76h6l-4 6 5 5M1757 88l3-3-3-2" fill="none" stroke="#999"/></g>
<path d="M1776 76l-4 5 6 2-4 6M1773 76h4M1781 76l-1 6 3 6M1776 83l7-2" fill="none" stroke="#1b8f70" stroke-width="1.200"/>
<path d="M1797 76v6M1792 78l5 2 5-2M1797 80v4l-4 5M1797 84l4 5" fill="none" stroke="#1b8f70" stroke-width="1.200"/>
<rect x="1807" y="74" width="19" height="18" rx="4" fill="#555" stroke="#444"/>
<g opacity=".7"><use href="#mesh" x="1816" y="82"/></g><text class="t" x="1822" y="91" style="font-size:9px">4</text>
<g opacity=".6"><use href="#cr" x="1679" y="103"/><use href="#empty" x="1699" y="103"/><text class="t" x="1713" y="107" textLength="34">cs_grp</text><use href="#mesh" x="1778" y="102"/></g>
<text class="t" x="1781" y="111" style="font-size:9px">38</text>
<g opacity=".55"><use href="#cd" x="1639" y="123"/><use href="#coll" x="1659" y="123"/><text class="t" x="1673" y="127" textLength="72">character1_cs</text></g>
<use href="#chk" x="1860" y="122"/>
<g opacity=".5"><use href="#cr" x="1659" y="143"/><use href="#empty" x="1678" y="143"/><text class="t" x="1693" y="147" textLength="34">cs_grp</text><use href="#mesh" x="1758" y="142"/></g>
<text class="t" x="1759" y="151" style="font-size:9px">38</text>

<rect x="1649" y="153" width="20" height="19" rx="4" fill="#555" stroke="#444"/>
<use href="#cr" x="1639" y="163"/><use href="#mesh" x="1659" y="163"/><text class="t" x="1673" y="167" textLength="97">Applied.MainBody</text><use href="#wr" x="1800" y="163"/><use href="#dots" x="1820" y="163"/><use href="#tri" x="1839" y="163"/>
<use href="#cr" x="1639" y="183"/><use href="#mesh" x="1659" y="183"/><text class="t" x="1673" y="187" textLength="61">LowerTeeth</text><use href="#wr" x="1765" y="183"/><use href="#dots" x="1784" y="183"/><use href="#tri" x="1805" y="183"/>
<use href="#cr" x="1639" y="203"/><use href="#mesh" x="1659" y="203"/><text class="t" x="1673" y="207" textLength="41">Tongue</text><use href="#wr" x="1744" y="203"/><use href="#dots" x="1764" y="203"/><use href="#tri" x="1784" y="203"/>
<use href="#cr" x="1639" y="223"/><use href="#mesh" x="1659" y="223"/><text class="t" x="1673" y="227" textLength="61">UpperTeeth</text><use href="#wr" x="1765" y="223"/><use href="#dots" x="1784" y="223"/><use href="#tri" x="1805" y="223"/>
<use href="#cr" x="1619" y="243"/><use href="#mesh" x="1639" y="243"/><text class="t" x="1653" y="247" textLength="28">Cube</text><use href="#wr" x="1711" y="243"/><use href="#tri" x="1731" y="243"/>
<use href="#cr" x="1619" y="263"/><use href="#mesh" x="1639" y="263"/><text class="t" x="1653" y="267" textLength="43">HairTies</text><use href="#wr" x="1726" y="263"/><use href="#dots" x="1746" y="263"/><use href="#tri" x="1766" y="263"/>
<use href="#cr" x="1619" y="283"/><use href="#mesh" x="1639" y="283"/><text class="t" x="1653" y="287" textLength="61">LowerTeeth</text><use href="#wr" x="1745" y="283"/><use href="#dots" x="1765" y="283"/><use href="#tri" x="1784" y="283"/>
<use href="#cr" x="1619" y="303"/><use href="#mesh" x="1639" y="303"/><text class="t" x="1653" y="307" textLength="41">Tongue</text><use href="#wr" x="1724" y="303"/><use href="#dots" x="1744" y="303"/><use href="#tri" x="1764" y="303"/>
<use href="#cr" x="1619" y="323"/><use href="#mesh" x="1639" y="323"/><text class="t" x="1653" y="327" textLength="61">UpperTeeth</text><use href="#wr" x="1745" y="323"/><use href="#dots" x="1765" y="323"/><use href="#tri" x="1784" y="323"/>
<!-- eye/cam columns -->
<g>
<use href="#eye" x="1880" y="42"/><use href="#cam" x="1900" y="42"/>
<use href="#eye" x="1880" y="62"/><use href="#cam" x="1900" y="62"/>
<path d="M1874 82q6 5 12 0" stroke="#aaa" fill="none"/><use href="#camX" x="1900" y="82"/>
<use href="#eyeD" x="1880" y="122"/><g opacity=".4"><use href="#camX" x="1900" y="122"/></g>
<use href="#eyeD" x="1880" y="142"/><g opacity=".4"><use href="#camX" x="1900" y="142"/></g>
<use href="#eye" x="1880" y="162"/><use href="#cam" x="1900" y="162"/>
<use href="#eye" x="1880" y="182"/><use href="#cam" x="1900" y="182"/>
<use href="#eye" x="1880" y="202"/><use href="#cam" x="1900" y="202"/>
<use href="#eye" x="1880" y="222"/><use href="#cam" x="1900" y="222"/>
<use href="#eye" x="1880" y="242"/><use href="#cam" x="1900" y="242"/>
<use href="#eye" x="1880" y="262"/><use href="#cam" x="1900" y="262"/>
<use href="#eye" x="1880" y="282"/><use href="#cam" x="1900" y="282"/>
<use href="#eye" x="1880" y="302"/><use href="#cam" x="1900" y="302"/>
<use href="#eye" x="1880" y="322"/><use href="#cam" x="1900" y="322"/>
</g>
<rect x="1916" y="200" width="3" height="60" fill="#3a3a3a"/>

<!-- ============ PROPERTIES ============ -->
<rect x="1588" y="348" width="331" height="615" rx="5" fill="#303030"/>
<rect x="1588" y="373" width="29" height="590" fill="#262626"/>
<!-- material list (top row is clipped by the header drawn afterwards) -->
<rect x="1625" y="366" width="258" height="50" rx="4" fill="#2a2a2a"/>
<circle cx="1647" cy="371" r="6" fill="#3a2a50"/>
<text class="t" x="1661" y="377" textLength="33">Brows</text>
<rect x="1588" y="348" width="331" height="25" rx="5" fill="#2b2b2b"/>
<rect x="1597" y="350" width="31" height="19" rx="4" fill="#2a2a2a" stroke="#1c1c1c"/>
<rect x="1601" y="353" width="13" height="6" rx="3" fill="#ddd"/><rect x="1601" y="360" width="13" height="6" rx="3" fill="#ddd"/>
<use href="#cd" x="1622" y="359"/>
<rect x="1697" y="350" width="118" height="19" rx="4" fill="#232323" stroke="#1c1c1c"/>
<circle cx="1710" cy="357" r="4.500" fill="none" stroke="#ccc" stroke-width="1.200"/><path d="M1707 361l-4 5" stroke="#ccc" stroke-width="1.200"/>
<text class="t d" x="1722" y="363" textLength="35">Search</text>
<rect x="1893" y="350" width="19" height="19" rx="4" fill="#2a2a2a" stroke="#1c1c1c"/><use href="#cd" x="1902" y="360"/>
<rect x="1631" y="383" width="228" height="18" rx="3" fill="#4772b3"/>
<circle cx="1647" cy="392" r="6" fill="#6b0e43"/>
<text class="t w" x="1661" y="396" textLength="61">OutlineSkin</text>
<path d="M1637 404v5l5-2.500z" fill="#bbb"/>
<path d="M1759 406h10M1759 409h10" stroke="#aaa" stroke-dasharray="1.500 1.500"/>
<rect x="1869" y="373" width="9" height="29" rx="4" fill="#505050"/>
<rect x="1893" y="373" width="18" height="35" rx="4" fill="#545454"/>
<path d="M1893 390h18" stroke="#3a3a3a"/>
<path d="M1902 376l4 5h-8zM1902 402l4-5h-8z" fill="#e0e0e0"/>
<!-- name row -->
<rect x="1625" y="423" width="247" height="19" rx="4" fill="#545454"/>
<path d="M1629 423H1812V442H1629Q1625 442 1625 438V427Q1625 423 1629 423Z" fill="#232323"/>
<use href="#matI" x="1637" y="432"/><use href="#cd" x="1650" y="433"/>
<path d="M1657 423V442" stroke="#3a3a3a"/>
<text class="t" x="1664" y="436" textLength="61">OutlineSkin</text>
<path d="M1816 428l7-3 7 3v6q0 5-7 7-7-2-7-7z" transform="translate(-1 0)" fill="none" stroke="#888" stroke-width="1.200"/>
<path d="M1832 423V442M1852 423V442" stroke="#3a3a3a"/>
<path d="M1839 427h7l4 4v5h-3M1839 427v4h-4v9h11v-4h-7z" fill="none" stroke="#ddd" stroke-width="1.100"/>
<path d="M1858 428l8 9M1866 428l-8 9" stroke="#ddd" stroke-width="1.100"/>
<rect x="1880" y="423" width="32" height="19" rx="4" fill="#2a2a2a" stroke="#1c1c1c"/>
<g transform="translate(1892 432) scale(.9)"><path d="M-5-5H5L0 6Z" fill="none" stroke="#ddd" stroke-width="1.300"/><g fill="#2a2a2a" stroke="#ddd"><rect x="-6.500" y="-6.500" width="3" height="3"/><rect x="3.500" y="-6.500" width="3" height="3"/><rect x="-1.500" y="4.500" width="3" height="3"/></g></g>
<use href="#cd" x="1905" y="433"/>
<!-- panels -->
<g fill="#3b3b3b">
<rect x="1625" y="452" width="287" height="25" rx="4"/>
<rect x="1625" y="479" width="287" height="122" rx="4"/>
<rect x="1625" y="603" width="287" height="25" rx="4"/>
<rect x="1625" y="630" width="287" height="25" rx="4"/>
<rect x="1625" y="657" width="287" height="25" rx="4"/>
<rect x="1625" y="684" width="287" height="279"/>
</g>
<rect x="1625" y="770" width="287" height="193" fill="#363636"/>
<g id="gr" fill="#7a7a7a"><path d="M1892 464h10M1892 467h10" stroke="#777" stroke-dasharray="1.500 1.500"/></g>
<use href="#gr" y="27"/><use href="#gr" y="152"/><use href="#gr" y="179"/><use href="#gr" y="206"/><use href="#gr" y="232"/>
<use href="#cr" x="1638" y="465"/><text class="t" x="1647" y="469" textLength="41">Preview</text>
<use href="#cd" x="1638" y="492"/><text class="t" x="1647" y="496" textLength="40">Surface</text>
<use href="#cr" x="1638" y="616"/><text class="t" x="1647" y="620" textLength="41">Volume</text>
<use href="#cr" x="1638" y="643"/><text class="t" x="1647" y="647" textLength="71">Displacement</text>
<use href="#cr" x="1638" y="670"/><text class="t" x="1647" y="674" textLength="53">Thickness</text>
<use href="#cd" x="1638" y="698"/><text class="t" x="1647" y="701" textLength="43">Settings</text>
<text class="t e" x="1729" y="526">Surface</text>
<rect x="1739" y="513" width="144" height="18" rx="4" fill="#262626"/>
<circle cx="1748" cy="522" r="3.500" fill="#58c858"/>
<text class="t" x="1760" y="526" textLength="48">Emission</text>
<text class="t e" x="1729" y="562">Color</text>
<rect x="1739" y="549" width="144" height="18" rx="4" fill="#262626"/>
<path d="M1758 549H1879Q1883 549 1883 553V563Q1883 567 1879 567H1758Z" fill="#6b0e43"/>
<circle cx="1748" cy="558" r="3.500" fill="#c8c828"/>
<circle cx="1894" cy="558" r="1.800" fill="#ddd"/>
<text class="t e" x="1728" y="587">Strength</text>
<rect x="1739" y="574" width="144" height="18" rx="4" fill="#262626"/>
<path d="M1758 574H1879Q1883 574 1883 578V588Q1883 592 1879 592H1758Z" fill="#545454"/>
<circle cx="1748" cy="583" r="3.500" fill="#a0a0a0"/>
<circle cx="1894" cy="583" r="1.800" fill="#ddd"/>
<text class="t m" x="1820" y="587" textLength="30" style="fill:#ddd">1.000</text>
<text class="t e" x="1737" y="731">Pass Index</text>
<rect x="1747" y="718" width="156" height="18" rx="4" fill="#545454"/>
<text class="t m" x="1825" y="731" style="fill:#ddd">0</text>
<use href="#cd" x="1652" y="758"/><text class="t" x="1661" y="762" textLength="40">Surface</text>
<text class="t e" x="1737" y="792">Backface Culling</text>
<g id="ckon"><rect x="1747" y="782" width="12" height="12" rx="2.500" fill="#4772b3"/><path d="M1750 788l2.500 3 4-6" fill="none" stroke="#fff" stroke-width="1.500"/></g>
<text class="t" x="1763" y="792" textLength="40">Camera</text>
<rect x="1747" y="804" width="12" height="12" rx="2.500" fill="#545454"/>
<text class="t" x="1763" y="814" textLength="43">Shadow</text>
<use href="#ckon" y="44"/>
<text class="t" x="1763" y="836" textLength="105">Light Probe Volume</text>
<text class="t e" x="1737" y="861">Displacement</text>
<rect x="1747" y="848" width="156" height="19" rx="4" fill="#262626"/>
<text class="t" x="1754" y="861" textLength="58">Bump Only</text><use href="#cd" x="1897" y="858"/>
<text class="t e d" x="1737" y="881">Max Distance</text>
<rect x="1747" y="867" width="156" height="20" rx="4" fill="#484848"/>
<text class="t m d" x="1824" y="880">0 m</text>
<use href="#ckon" y="114"/>
<text class="t" x="1763" y="906" textLength="115">Transparent Shadows</text>
<text class="t e" x="1737" y="931">Render Method</text>
<rect x="1747" y="918" width="156" height="19" rx="4" fill="#262626"/>
<text class="t" x="1754" y="931" textLength="44">Dithered</text><use href="#cd" x="1897" y="928"/>
<rect x="1747" y="943" width="12" height="12" rx="2.500" fill="#545454"/>
<text class="t" x="1763" y="953" textLength="126">Raytraced Transmission</text>
<rect x="1914" y="452" width="2" height="160" fill="#4a4a4a"/>
<!-- tabs -->
<rect x="1591" y="770" width="26" height="26" rx="4" fill="#3b3b3b"/>
<g fill="none" stroke="#ddd" stroke-width="1.300">
<path d="M1599 388v6M1597 397h4v6h-4zM1609 388v7M1606 388q0 4 3 5 3-1 3-5M1609 395v9" />
<path d="M1597 426h14v12h-14zM1602 423v3M1607 423v3M1611 429h2v6h-2"/><circle cx="1603" cy="432" r="2.500" fill="#ddd"/>
<path d="M1597 454h14v3h-14zM1600 457v8h8v-8" fill="#ddd"/>
<path d="M1598 482h11v9M1596 484v11h12" /><rect x="1600" y="479" width="10" height="10" fill="#ddd"/>
<circle cx="1608" cy="518" r="3.500"/><path d="M1602 508q-5 6-4 10 2 3 4 1 2-6 0-11z" fill="#ddd"/><circle cx="1609" cy="509" r="1.500" fill="#ddd"/>
<rect x="1597" y="572" width="13" height="3.500" /><rect x="1598" y="576" width="11" height="9"/><path d="M1601 578h5"/>
</g>
<circle cx="1604" cy="543" r="6.500" fill="#b04848"/><path d="M1598 541q6 3 12 0M1603 537l2 12" stroke="#262626" fill="none"/>
<path d="M1597 609v-2h3M1608 607h3v2M1611 621v2h-3M1600 623h-3v-2" fill="none" stroke="#c8853f"/><rect x="1599" y="610" width="10" height="10" fill="#c8853f"/>
<g transform="translate(1604 643) scale(1.100)"><path d="M6-5.500A4 4 0 0 0 .5-1L-5.500 5A1.500 1.500 0 0 0-3.500 7L2.500 1A4 4 0 0 0 7-3.500L4.500-1.500 2.500-3Z" fill="#5d8ad8"/></g>
<g fill="none" stroke="#5d8ad8" stroke-width="1.400"><path d="M1599 666 1610 668M1599 668 1600 678 1609 678"/></g>
<g fill="#5d8ad8"><circle cx="1599" cy="666" r="2.500"/><circle cx="1610" cy="668" r="2"/><circle cx="1609" cy="677" r="2.500"/></g>
<circle cx="1604" cy="698" r="4" fill="#5d8ad8"/><path d="M1611 692a8 8 0 1 0 1 8" fill="none" stroke="#5d8ad8" stroke-width="1.400"/><circle cx="1610" cy="694" r="1.500" fill="#5d8ad8"/>
<g fill="none" stroke="#5d8ad8" stroke-width="1.600"><path d="M1598 731q-4-6 4-9l6-4q5-1 3 4l-3 6q-5 7-10 3z"/><circle cx="1603" cy="726" r="2.500"/></g>
<use href="#tri" x="1604" y="755"/>
<circle cx="1604" cy="783" r="6.500" fill="#e06868"/><path d="M1604 776.500a6.500 6.500 0 0 0-6.500 6.500H1604Z" fill="#2e2e2e"/>
<g transform="translate(1597 812)"><rect width="14" height="14" fill="#8a3a44"/><path d="M0 0h3.500v3.500H0zM7 0h3.500v3.500H7zM3.500 3.500H7V7H3.500zM10.500 3.500H14V7h-3.500zM0 7h3.500v3.500H0zM7 7h3.500v3.500H7zM3.500 10.500H7V14H3.500zM10.500 10.500H14V14h-3.500z" fill="#d87080"/></g>
<path d="M1588 409h29M1588 557h29M1588 593h29M1588 833h29" stroke="#1f1f1f"/>

<!-- ============ IMAGE EDITOR BOTTOM ============ -->
<rect x="0" y="802" width="393" height="161" rx="5" fill="#383838"/>
<g stroke="#494949" fill="none">
<path d="M100 828V963M133 828V963M164 828V963M196 828V963M229 828V963M260 828V963M292 828V963"/>
<path d="M69 843H324M69 876H324M69 907H324M69 939H324"/>
</g>
<path d="M69 828V963M324 828V963" stroke="#777" fill="none"/>
<rect x="0" y="802" width="393" height="26" rx="5" fill="#303030"/>
<rect x="0" y="828" width="209" height="25" rx="3" fill="#303030" opacity=".6"/>
<g fill="#2a2a2a" stroke="#1f1f1f">
<rect x="9" y="805" width="31" height="18" rx="4"/><rect x="46" y="805" width="66" height="18" rx="4"/><rect x="155" y="805" width="31" height="18" rx="4"/><rect x="348" y="805" width="38" height="18" rx="4"/>
</g>
<rect x="186" y="805" width="119" height="18" rx="4" fill="#545454"/>
<path d="M245 805V823" stroke="#3a3a3a"/>
<rect x="348" y="805" width="18" height="18" rx="3" fill="#4772b3"/>
<use href="#editorImg" x="19" y="814"/><use href="#cd" x="33" y="815"/>
<use href="#imgI" x="57" y="814"/><use href="#cd" x="106" y="815"/>
<text class="t" x="71" y="818" textLength="25">View</text>
<path d="M123 809h12M123 814h12M123 819h12" stroke="#aaa"/>
<use href="#imgI" x="165" y="814"/><use href="#cd" x="179" y="815"/>
<path d="M197 810v9M192 814.500h10" stroke="#ddd" stroke-width="1.200"/>
<text class="t" x="213" y="818" textLength="23">New</text>
<path d="M250 808h6l2 2h6v11h-14z" fill="#ddd"/>
<text class="t" x="270" y="818" textLength="28">Open</text>
<path d="M318 808l7 7-2 2-6 0-3 3 5-5-2-3 3-1z" fill="none" stroke="#999" transform="translate(0 -1)"/>
<path d="M351 820a9 9 0 0 1 10-11M355 810h6v5" fill="none" stroke="#fff" stroke-width="1.100"/><circle cx="352" cy="820" r="1.500" fill="#fff"/><use href="#cd" x="376" y="815"/>
<path d="M18 848l10-10 3 3-10 10z" fill="#9a9a9a"/><circle cx="20" cy="846" r="3.500" fill="#888"/><path d="M27 837l4 4" stroke="#eee" stroke-width="2.500"/>
<rect x="45" y="831" width="155" height="18" rx="4" fill="#545454"/>
<text class="t" x="60" y="844" textLength="64">Sample Size</text>
<text class="t" x="164" y="844" textLength="23">1 px</text>
<circle cx="369" cy="875" r="14" fill="#2a2a2a"/><circle cx="369" cy="905" r="14" fill="#2a2a2a"/>
<use href="#iZoom" x="369" y="875"/><use href="#iHand" x="369" y="905"/>
<rect x="0" y="875" width="9" height="18" rx="2" fill="#2a2a2a"/><use href="#cr" x="4" y="884"/>
<rect x="383" y="875" width="10" height="18" rx="2" fill="#2a2a2a"/><path d="M390 881l-3 3 3 3" fill="none" stroke="#ccc"/>

<!-- ============ NODE EDITOR ============ -->
<g clip-path="url(#cn)">
<rect x="396" y="802" width="1187" height="161" fill="#1d1d1d"/>
<g fill="#2a2a2a" stroke="#333">
<rect x="404" y="805" width="32" height="18" rx="4"/><rect x="442" y="805" width="90" height="18" rx="4"/><rect x="838" y="805" width="79" height="18" rx="4"/><rect x="924" y="805" width="170" height="18" rx="4"/>
</g>
<rect x="1035" y="805" width="59" height="18" rx="3" fill="#545454"/>
<rect x="955" y="805" width="80" height="18" fill="#232323"/>
<g fill="none" stroke="#ddd">
<circle cx="415" cy="814" r="6.500"/><path d="M413 811a3 3 0 0 1 3-2"/><use href="#cd" x="429" y="815"/>
<use href="#objI" x="453" y="814"/><use href="#cd" x="525" y="815"/>
<use href="#cd" x="911" y="815"/>
<use href="#matI" x="934" y="814"/><use href="#cd" x="948" y="815"/>
<path d="M1039 809l6-2 6 2v6q0 4-6 6-6-2-6-6z" stroke="#888"/>
<path d="M1060 809h6l3 3v6h-3M1060 809v3h-3v9h9v-3h-6z"/>
<path d="M1081 810l7 8M1088 810l-7 8"/>
<path d="M1106 808l7 7-2 2-3 0-4 4 4-5-2-3 3-1z" stroke="#999"/>
</g>
<rect x="710" y="807" width="14" height="14" rx="2.500" fill="#4772b3"/><path d="M713 814l2.500 3 5-7" fill="none" stroke="#fff" stroke-width="1.500"/>
<text class="t" x="467" y="818" textLength="33">Object</text>
<text class="t" x="544" y="818" textLength="25">View</text>
<text class="t" x="585" y="818" textLength="31">Select</text>
<text class="t" x="632" y="818" textLength="21">Add</text>
<text class="t" x="669" y="818" textLength="28">Node</text>
<text class="t" x="727" y="818" textLength="57">Use Nodes</text>
<text class="t" x="846" y="818" textLength="30">Slot 6</text>
<text class="t" x="962" y="818" textLength="61">OutlineSkin</text>
<rect x="1513" y="805" width="19" height="18" rx="4" fill="#555"/>
<path d="M1518 812a4 4 0 0 1 9 0c0 3-3 4-3 8M1521 812a2 2 0 0 1 3 0" fill="none" stroke="#bbb"/>
<rect x="1538" y="805" width="39" height="18" rx="4" fill="#2a2a2a" stroke="#333"/>
<rect x="1538" y="805" width="19" height="18" rx="4" fill="#4772b3"/>
<circle cx="1547" cy="814" r="6" fill="#ddd"/><circle cx="1550" cy="812" r="2.500" fill="#4772b3"/><use href="#cd" x="1566" y="815"/>
<!-- breadcrumbs -->
<use href="#objI" x="422" y="849"/>
<text class="t" x="438" y="853" textLength="97">Applied.MainBody</text>
<path d="M552 845l4 4-4 4" fill="none" stroke="#ccc"/>
<g transform="translate(573 849)"><path d="M-5-5H5L0 6Z" fill="none" stroke="#ddd" stroke-width="1.200"/><g fill="#1d1d1d" stroke="#ddd"><rect x="-6.500" y="-6.500" width="3" height="3"/><rect x="3.500" y="-6.500" width="3" height="3"/><rect x="-1.500" y="4.500" width="3" height="3"/></g></g>
<text class="t" x="590" y="853" textLength="54">Cube.019</text>
<path d="M659 845l4 4-4 4" fill="none" stroke="#ccc"/>
<use href="#matI" x="680" y="849"/>
<text class="t" x="697" y="853" textLength="59">OutlineSkin</text>
<rect x="396" y="848" width="12" height="19" rx="2" fill="#555"/><use href="#cr" x="402" y="857"/>
<rect x="1571" y="848" width="12" height="20" rx="2" fill="#505050"/><path d="M1580 855l-3 3 3 3" fill="none" stroke="#ccc"/>
<rect x="405" y="957" width="1170" height="4" rx="2" fill="#333"/>
<rect x="1580" y="830" width="3" height="107" rx="1.500" fill="#3a3a3a"/>
<!-- link -->
<path d="M1041 864C1100 864 1130 901 1196 901" fill="none" stroke="#d8f5c8" stroke-width="2"/>
<!-- emission node -->
<rect x="901" y="828" width="140" height="99" rx="5" fill="#303030" stroke="#f0f0f0" stroke-width="1.200"/>
<path d="M906 828.500H1036Q1041 828.500 1041 833V849H901V833Q901 828.500 906 828.500Z" fill="#2c632c"/>
<use href="#cd" x="915" y="839"/>
<text class="t" x="927" y="843" textLength="49">Emission</text>
<text class="t" x="980" y="868" textLength="49">Emission</text>
<circle cx="1040.500" cy="864" r="4" fill="#5fc95f"/>
<circle cx="901" cy="888" r="4" fill="#c7c729"/>
<text class="t" x="912" y="892" textLength="29">Color</text>
<rect x="963" y="879" width="66" height="18" rx="3" fill="#6b0e43" stroke="#3a3a3a"/>
<rect x="912" y="901" width="117" height="18" rx="4" fill="#545454"/>
<circle cx="901" cy="910" r="4" fill="#a1a1a1"/>
<text class="t" x="927" y="914" textLength="44">Strength</text>
<text class="t" x="985" y="914" textLength="30" style="fill:#ddd">1.000</text>
<!-- material output -->
<rect x="1196" y="843" width="140" height="140" rx="5" fill="#303030"/>
<path d="M1201 843H1331Q1336 843 1336 848V863H1196V848Q1196 843 1201 843Z" fill="#3f1c25"/>
<use href="#cd" x="1212" y="853"/>
<text class="t" x="1222" y="857" textLength="79">Material Output</text>
<rect x="1206" y="870" width="119" height="20" rx="4" fill="#262626" stroke="#3d3d3d"/>
<text class="t" x="1214" y="884" textLength="14">All</text><use href="#cd" x="1319" y="881"/>
<circle cx="1196" cy="901" r="4" fill="#5fc95f"/><text class="t" x="1207" y="905" textLength="39">Surface</text>
<circle cx="1196" cy="923" r="4" fill="#5fc95f"/><text class="t" x="1207" y="927" textLength="40">Volume</text>
<circle cx="1196" cy="945" r="4" fill="#6363c7"/><text class="t" x="1207" y="949" textLength="71">Displacement</text>
<text class="t" x="1207" y="971" textLength="52">Thickness</text>
</g>

<!-- ============ STATUS BAR ============ -->
<rect x="10" y="967" width="11" height="17" rx="4" fill="none" stroke="#9a9a9a"/><path d="M10 971q0-4 5-4v7h-5z" fill="#9a9a9a"/>
<text class="t" x="24" y="980" textLength="71" style="fill:#999">Sample Color</text>
<rect x="105" y="967" width="11" height="17" rx="4" fill="none" stroke="#9a9a9a"/><rect x="109" y="969" width="3" height="6" rx="1.500" fill="#9a9a9a"/>
<text class="t" x="118" y="980" textLength="49" style="fill:#999">Pan View</text>
<text class="t" x="1882" y="980" textLength="26" style="fill:#808080">4.5.5</text>
</svg>
</body></html>
